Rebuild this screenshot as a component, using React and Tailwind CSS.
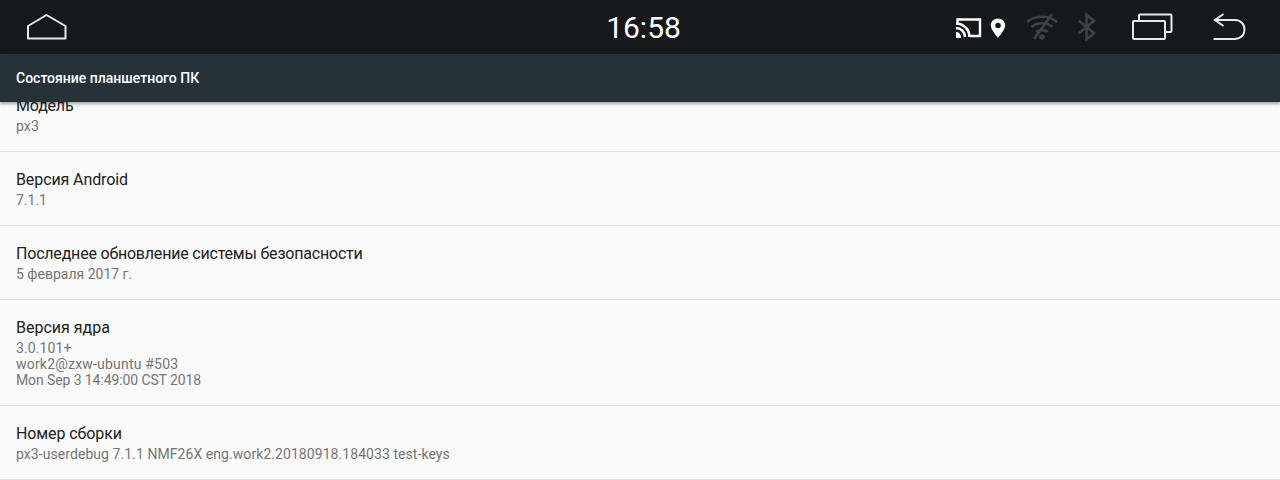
const rows = [
  { title: "Модель", titleClass: "tracking-[-0.2px]", lines: [{ text: "px3", cls: "tracking-[0.1px]" }] },
  { title: "Версия Android", titleClass: "tracking-[-0.1px]", lines: [{ text: "7.1.1", cls: "" }] },
  { title: "Последнее обновление системы безопасности", titleClass: "tracking-[-0.2px]", lines: [{ text: "5 февраля 2017 г.", cls: "" }] },
  {
    title: "Версия ядра",
    titleClass: "",
    lines: [
      { text: "3.0.101+", cls: "tracking-[0.1px]" },
      { text: "work2@zxw-ubuntu #503", cls: "tracking-[0.2px]" },
      { text: "Mon Sep 3 14:49:00 CST 2018", cls: "tracking-[-0.1px]" },
    ],
  },
  {
    title: "Номер сборки",
    titleClass: "tracking-[-0.1px]",
    lines: [{ text: "px3-userdebug 7.1.1 NMF26X eng.work2.20180918.184033 test-keys", cls: "tracking-[0.065px]" }],
  },
];

function StatusBar() {
  return (
    <div className="h-[54px] bg-[#15191c] flex items-center relative shrink-0">
      <svg width="40" height="26" viewBox="0 0 40 26" fill="none" stroke="#e8e8e8" strokeWidth="2" className="absolute left-[27px] top-[14px]">
        <path d="M1 12 L19.500 1 L38.500 12 V24.500 H1 Z" strokeLinejoin="round" />
      </svg>
      <div className="w-full pl-[7px] pt-[1px] text-center text-[30px] leading-[54px] text-white">16:58</div>

      <svg width="26" height="20" viewBox="0 0 26 20" fill="none" className="absolute left-[956px] top-[18px]">
        <path d="M1.500 6 V1.500 H24 V18 H14" stroke="#fff" strokeWidth="2.400" />
        <path d="M0 5.500 A13.500 13.500 0 0 1 13.500 19 M0 10 A9 9 0 0 1 9 19" stroke="#fff" strokeWidth="2.600" />
        <path d="M0 14 A5 5 0 0 1 5 19 V20 H0 Z" fill="#fff" />
      </svg>
      <svg width="16" height="20" viewBox="0 0 16 20" className="absolute left-[990px] top-[18px]">
        <path fillRule="evenodd" fill="#fff" d="M8 0.500 C3.900 0.500 0.800 3.600 0.800 7.500 C0.800 12 8 19.800 8 19.800 C8 19.800 15.200 12 15.200 7.500 C15.200 3.600 12.100 0.500 8 0.500 Z M8 4.700 A2.800 2.800 0 1 1 8 10.300 A2.800 2.800 0 1 1 8 4.700 Z" />
      </svg>
      <svg width="32" height="28" viewBox="0 0 32 28" fill="none" stroke="#3e4244" strokeWidth="2.600" className="absolute left-[1026px] top-[13px]">
        <path d="M1 9 C9 2 23 2 31 9" />
        <path d="M5.500 14 C11 9 21 9 26.500 14" />
        <path d="M10 19 C13 16.500 19 16.500 22 19" />
        <path d="M8 26 L26 1" />
        <circle cx="16" cy="24" r="2.800" fill="#3e4244" stroke="none" />
      </svg>
      <svg width="20" height="28" viewBox="0 0 20 28" fill="none" stroke="#3e4244" strokeWidth="2.600" className="absolute left-[1077px] top-[13px]">
        <path d="M1.500 7.500 L17 20 L9.500 26.500 V1.500 L17 8 L1.500 20.500" />
      </svg>

      <svg width="42" height="28" viewBox="0 0 42 28" fill="none" stroke="#eaeaea" strokeWidth="2" className="absolute left-[1131px] top-[13px]">
        <rect x="2" y="8" width="32" height="18" rx="1" />
        <path d="M8 8 V2.500 Q8 1.500 9 1.500 H39.500 Q40.500 1.500 40.500 2.500 V18 Q40.500 19 39.500 19 H34" />
      </svg>
      <svg width="34" height="28" viewBox="0 0 34 28" fill="none" stroke="#eaeaea" strokeWidth="2" className="absolute left-[1213px] top-[13px]">
        <path d="M10.500 1 L2 7 L10.500 13" />
        <path d="M2 7 H22 C27.500 7 31.500 11 31.500 16.500 C31.500 22 27.500 26 22 26 H0.500" />
      </svg>
    </div>
  );
}

export default function App() {
  return (
    <div className="w-[1280px] h-[480px] overflow-hidden flex flex-col bg-[#fafafa] font-['Roboto',sans-serif]">
      <StatusBar />
      <div className="h-[48px] shrink-0 bg-[#263238] flex items-center px-4 relative z-10 shadow-[0_2px_3px_rgba(0,0,0,0.35)]">
        <span className="text-[14px] font-medium text-white">Состояние планшетного ПК</span>
      </div>
      <div className="flex-1 overflow-hidden">
        <div className="-mt-[24px]">
          {rows.map((row) => (
            <div key={row.title} className="border-b border-[#e1e1e1] px-4 pt-[18px] pb-[17px]">
              <div className={"text-[16px] leading-[20px] text-[#212121] " + row.titleClass}>{row.title}</div>
              <div className="mt-[2px] text-[14px] leading-[16px] text-[#757575]">
                {row.lines.map((line) => (
                  <div key={line.text} className={line.cls}>{line.text}</div>
                ))}
              </div>
            </div>
          ))}
        </div>
      </div>
    </div>
  );
}
